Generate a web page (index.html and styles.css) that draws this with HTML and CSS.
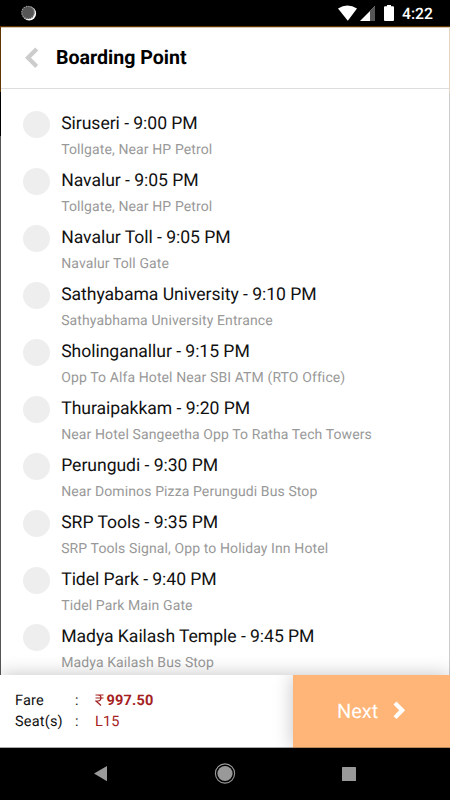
FILE: index.html
```html
<!DOCTYPE html>
<html lang="en">
<head>
<meta charset="utf-8">
<title>Boarding Point</title>
<link rel="stylesheet" href="styles.css">
</head>
<body>
<div class="status">
  <svg class="sync" width="16" height="16" viewBox="0 0 16 16"><circle cx="8.200" cy="8.500" r="6.900" fill="#fff"/><circle cx="7" cy="7.500" r="6.600" fill="#555"/><circle cx="7" cy="7.500" r="6.200" fill="none" stroke="#999" stroke-width="1.200" stroke-dasharray="1.200 1.200"/></svg>
  <svg class="signals" width="58" height="18" viewBox="337 4 58 18"><path d="M338 8.600Q347.500 2.200 357 8.600L347.800 20.800Z" fill="#fff"/><path d="M375 6V21H360Z" fill="#fff"/><path d="M370 11V21H375V6Z" fill="#555"/><path d="M387 5h4v1.300h2q1 0 1 1V20q0 1-1 1h-8q-1 0-1-1V7.300q0-1 1-1h2Z" fill="#fff"/></svg>
  <span class="clock">4:22</span>
</div>
<main class="sheet">
  <header class="header">
    <svg class="back" width="14" height="22" viewBox="0 0 14 22"><path d="M12.700 2L4 10.700L12.700 19.400" fill="none" stroke="#ccc" stroke-width="4.200"/></svg>
    <h1>Boarding Point</h1>
  </header>
  <ul class="points">
    <li><i></i><div><h2>Siruseri - 9:00 PM</h2><p>Tollgate, Near HP Petrol</p></div></li>
    <li><i></i><div><h2>Navalur - 9:05 PM</h2><p>Tollgate, Near HP Petrol</p></div></li>
    <li><i></i><div><h2>Navalur Toll - 9:05 PM</h2><p>Navalur Toll Gate</p></div></li>
    <li><i></i><div><h2>Sathyabama University - 9:10 PM</h2><p>Sathyabhama University Entrance</p></div></li>
    <li><i></i><div><h2>Sholinganallur - 9:15 PM</h2><p>Opp To Alfa Hotel Near SBI ATM (RTO Office)</p></div></li>
    <li><i></i><div><h2>Thuraipakkam - 9:20 PM</h2><p>Near Hotel Sangeetha Opp To Ratha Tech Towers</p></div></li>
    <li><i></i><div><h2>Perungudi - 9:30 PM</h2><p>Near Dominos Pizza Perungudi Bus Stop</p></div></li>
    <li><i></i><div><h2>SRP Tools - 9:35 PM</h2><p>SRP Tools Signal, Opp to Holiday Inn Hotel</p></div></li>
    <li><i></i><div><h2>Tidel Park - 9:40 PM</h2><p>Tidel Park Main Gate</p></div></li>
    <li><i></i><div><h2>Madya Kailash Temple - 9:45 PM</h2><p>Madya Kailash Bus Stop</p></div></li>
  </ul>
</main>
<footer class="footer">
  <dl class="summary">
    <dt>Fare</dt><dd>:</dd><dd class="fare"><svg class="rupee" role="img" aria-label="₹" width="9" height="12" viewBox="0 0 9 12"><path d="M.5 1H8.500M.5 4H8.500M.5 1H3C7 1 7 7 3 7H1L6 11.500" fill="none" stroke="currentColor" stroke-width="1.200"/></svg><b>997.50</b></dd>
    <dt>Seat(s)</dt><dd>:</dd><dd class="seat">L15</dd>
  </dl>
  <div class="next"><span>Next</span><svg width="13" height="20" viewBox="0 0 13 20"><path d="M2 2L9.200 9.300L2 16.600" fill="none" stroke="#fff" stroke-width="4.200"/></svg></div>
</footer>
<nav class="nav">
  <svg width="450" height="52" viewBox="0 748 450 52"><path d="M94 773.600L107 766V781.200Z" fill="#999"/><circle cx="225" cy="773.500" r="9.600" fill="none" stroke="#999" stroke-width="1.100"/><circle cx="225" cy="773.500" r="7.600" fill="#999"/><rect x="342" y="767" width="14" height="14" rx=".5" fill="#999"/></svg>
</nav>
</body>
</html>
```
FILE: styles.css
```css
* { box-sizing: border-box; margin: 0; padding: 0; }
body {
  width: 450px; height: 800px; overflow: hidden;
  display: flex; flex-direction: column;
  background: #000; color: #111;
  font-family: Roboto, "Liberation Sans", sans-serif;
  text-rendering: geometricPrecision;
}
.status { height: 26px; flex: none; display: flex; align-items: flex-start; padding: 4px 17px 0 21px; }
.sync { margin-top: 1px; }
.signals { margin-left: auto; }
.clock { width: 31px; margin-left: 7px; color: #fff; font-size: 15.700px; line-height: 20px; font-weight: 500; white-space: nowrap; }
.sheet {
  height: 649px; flex: none; overflow: hidden;
  padding: 1px 1px 0;
  background:
    linear-gradient(#5f3500, #5f3500) 0 0 / 100% 1px no-repeat,
    linear-gradient(#5f3500 66px, #000 66px, #000 110px, #555 110px) 0 0 / 1px 100% no-repeat,
    linear-gradient(#e5d5c0 66px, #ccc 66px) 100% 1px / 1px 100% no-repeat,
    #fff;
}
.header { height: 62px; border-top: 1px solid #d5c5b2; border-bottom: 1px solid #ddd; display: flex; align-items: center; padding-left: 23px; }
.back { margin-right: 18px; }
h1 { color: #000; font-size: 19.600px; line-height: 24px; font-weight: 700; }
.points { list-style: none; padding: 22px 0 0 22px; }
.points li { height: 57px; display: flex; }
.points i { width: 27px; height: 27px; border-radius: 50%; background: #eee; margin-right: 11.200px; }
h2 { font-size: 17.600px; line-height: 26px; font-weight: 400; letter-spacing: -.05px; white-space: nowrap; }
.points p { font-size: 14px; line-height: 20px; margin-top: 2.500px; color: #999; letter-spacing: .11px; white-space: nowrap; }
.footer { height: 73px; flex: none; display: flex; background: #fff; position: relative; box-shadow: 0 0 18px rgba(0,0,0,.24); border-bottom: 1px solid #aaa; }
.summary { flex: 1; display: grid; grid-template-columns: 60px 20px 1fr; grid-auto-rows: 21px; padding: 15px 0 0 15px; font-size: 14.500px; line-height: 21px; letter-spacing: .2px; }
.fare, .seat { color: #a52020; }
.fare { display: flex; }
.rupee { margin: 4px 2.500px 0 0; }
.fare b { font-weight: 700; }
.next { width: 157px; height: 73px; background: #ffb577; color: #fff; display: flex; align-items: center; padding-left: 44px; font-size: 20px; box-shadow: 0 0 18px rgba(0,0,0,.24); clip-path: inset(0 0 0 -20px); border-bottom: 1px solid #bd8658; }
.next svg { margin-left: 15px; }
.nav { height: 52px; background: #000; position: relative; }
.nav svg { display: block; }
```
